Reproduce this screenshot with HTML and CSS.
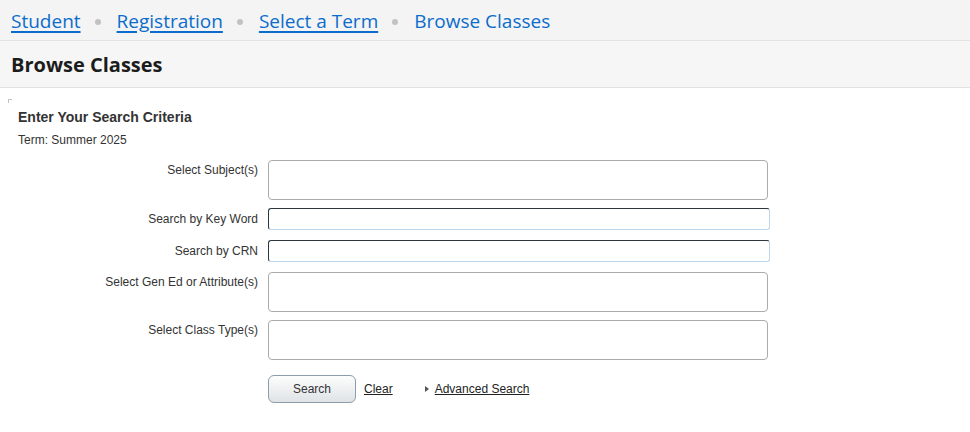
FILE: index.html
```html
<!DOCTYPE html>
<html>
<head>
<meta charset="utf-8">
<link rel="stylesheet" href="styles.css">
</head>
<body>
<nav class="crumbs">
  <a href="#" class="crumb">Student</a><span class="dot"></span>
  <a href="#" class="crumb">Registration</a><span class="dot"></span>
  <a href="#" class="crumb">Select a Term</a><span class="dot"></span>
  <span class="crumb current">Browse Classes</span>
</nav>
<header class="titlebar"><h1>Browse Classes</h1></header>
<main class="content">
  <div class="corner"></div>
  <h2 class="criteria">Enter Your Search Criteria</h2>
  <div class="term">Term: Summer 2025</div>
  <div class="form">
    <div class="row r-subject"><label>Select Subject(s)</label><div class="box tall"></div></div>
    <div class="row r-key"><label>Search by Key Word</label><div class="box text"></div></div>
    <div class="row r-crn"><label>Search by CRN</label><div class="box text"></div></div>
    <div class="row r-attr"><label>Select Gen Ed or Attribute(s)</label><div class="box tall"></div></div>
    <div class="row r-type"><label>Select Class Type(s)</label><div class="box tall"></div></div>
    <div class="row r-actions">
      <span class="spacer"></span>
      <button class="search">Search</button>
      <a href="#" class="clear">Clear</a>
      <span class="adv"><span class="tri"></span><a href="#">Advanced Search</a></span>
    </div>
  </div>
</main>
</body>
</html>
```
FILE: styles.css
```css
html, body { margin: 0; padding: 0; background: #fff; }
body { font-family: "Liberation Sans", Arial, sans-serif; color: #333; }

.crumbs {
  height: 41px;
  box-sizing: border-box;
  background: #f4f4f4;
  border-bottom: 1px solid #e4e4e4;
  display: flex;
  align-items: center;
  padding: 1px 0 0 11px;
  font-family: "Open Sans", sans-serif;
  font-size: 19px;
}
.crumb { color: #0b6ccc; text-decoration: underline; text-underline-offset: 3px; text-decoration-thickness: 2px; line-height: 38px; }
.crumb.current { text-decoration: none; }
.dot { width: 6px; height: 6px; border-radius: 50%; background: #c2c2c2; margin: 2px 16px 0 14px; }

.titlebar {
  height: 47px;
  background: #f6f6f6;
  border-bottom: 1px solid #e2e2e2;
  box-sizing: border-box;
  display: flex;
  align-items: center;
  padding-left: 11px;
}
.titlebar h1 {
  margin: 0;
  font-family: "Open Sans", sans-serif;
  font-weight: 700;
  font-size: 20px;
  color: #1c1c1c;
}

.content { padding: 11px 0 0 18px; position: relative; }
.corner {
  position: absolute; left: 8px; top: 11px;
  width: 3px; height: 3px;
  border-top: 1px solid #b9c4cf; border-left: 1px solid #b9c4cf;
}
.criteria { margin: 10px 0 0; font-size: 14px; font-weight: bold; color: #333; line-height: 16px; }
.term { margin-top: 8px; font-size: 12px; color: #333; line-height: 15px; }

.form { margin-top: 12px; display: flex; flex-direction: column; }
.row { display: flex; align-items: flex-start; }
.row label {
  width: 240px; margin-right: 10px; flex-shrink: 0;
  text-align: right; font-size: 12px; color: #333; padding-top: 3px; line-height: 15px;
}
.box { box-sizing: border-box; background: #fff; }
.box.tall { width: 500px; height: 40px; border: 1px solid #ababab; border-radius: 4px; }
.box.text {
  width: 502px; height: 22px; border-radius: 3px;
  border: 1px solid #bcd6ee; border-top-color: #2a3640; border-left-color: #2a3640;
}
.r-key { margin-top: 8px; }
.r-key label { padding-top: 4px; }
.r-crn { margin-top: 10px; }
.r-crn label { padding-top: 4px; }
.r-attr { margin-top: 10px; }
.r-type { margin-top: 8px; }
.r-actions { margin-top: 15px; align-items: center; }
.spacer { width: 250px; flex-shrink: 0; }
.search {
  width: 88px; height: 28px; box-sizing: border-box;
  border: 1px solid #8c9eac; border-radius: 6px;
  background: linear-gradient(#fdfdfd, #dfe3e6);
  font-family: "Liberation Sans", Arial, sans-serif; font-size: 12px; color: #333;
  padding: 0;
}
.clear { margin-left: 8px; font-size: 12px; color: #222; }
.adv { margin-left: 32px; display: flex; align-items: center; font-size: 12px; }
.adv a { color: #222; }
.tri {
  width: 0; height: 0; margin-right: 6px;
  border-top: 3.5px solid transparent; border-bottom: 3.5px solid transparent;
  border-left: 4px solid #555;
}
```
